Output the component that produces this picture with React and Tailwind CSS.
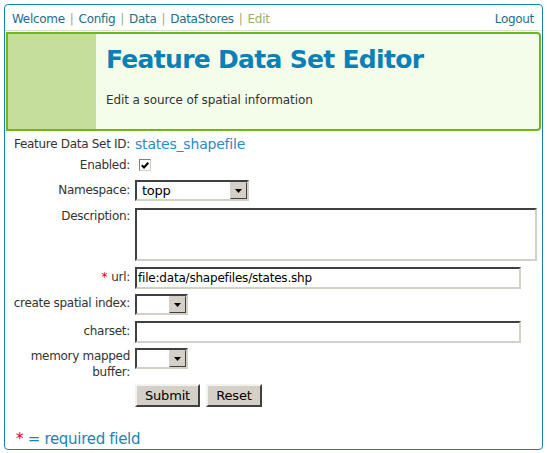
import React from 'react';

function Select({ width, value }) {
  return (
    <div
      className={`flex h-[21px] ${width} border-2 border-t-[#404040] border-l-[#404040] border-b-[#d4d0c8] border-r-[#d4d0c8] bg-white`}
    >
      <div className="flex-1 pl-[5px] text-[13px] leading-[17px] tracking-[-0.3px] text-black">{value}</div>
      <div className="flex w-[17px] items-center justify-center border border-t-[#d4d0c8] border-l-[#d4d0c8] border-b-[#404040] border-r-[#404040] bg-[#d4d0c8]">
        <svg width="7" height="4" viewBox="0 0 7 4">
          <path d="M0 0h7L3.5 4z" fill="#000" />
        </svg>
      </div>
    </div>
  );
}

function TextInput({ value, className = '' }) {
  return (
    <div
      className={`h-[22px] border-2 border-t-[#404040] border-l-[#404040] border-b-[#d4d0c8] border-r-[#d4d0c8] bg-white pl-[1px] text-[12px] leading-[18px] tracking-[-0.2px] text-black ${className}`}
    >
      {value}
    </div>
  );
}

function Row({ label, required, labelClass = '', className = '', children }) {
  return (
    <div className={`flex items-start ${className}`}>
      <div
        className={`w-[130px] shrink-0 pr-[5px] text-right text-[12px] leading-[16px] tracking-[-0.3px] text-[#333] ${labelClass}`}
      >
        {required && <span className="mr-1 text-[#e00000]">*</span>}
        {label}
      </div>
      {children}
    </div>
  );
}

export default function App() {
  return (
    <div className="h-[453px] w-[547px] bg-white p-[4px] font-['DejaVu_Sans',sans-serif]">
      <div className="flex h-[446px] w-[539px] flex-col rounded-[4px] border border-[#1a7fa6]">
        {/* Top nav */}
        <div className="flex h-[26px] items-center justify-between border-b border-[#d9e8c0] pl-[7px] pr-[8px] pt-[2px] text-[12px] tracking-[-0.3px] text-[#236e86]">
          <div className="flex items-center gap-[5px]">
            <span>Welcome</span>
            <span className="text-[#9aae70]">|</span>
            <span>Config</span>
            <span className="text-[#9aae70]">|</span>
            <span>Data</span>
            <span className="text-[#9aae70]">|</span>
            <span>DataStores</span>
            <span className="text-[#9aae70]">|</span>
            <span className="text-[#9aae70]">Edit</span>
          </div>
          <span>Logout</span>
        </div>

        {/* Title box */}
        <div className="mx-[1px] mt-[1px] flex h-[99px] shrink-0 rounded-r-[4px] border-2 border-[#72b41e] bg-[#f4fdea]">
          <div className="w-[88px] bg-[#c6de9c]" />
          <div className="flex flex-col pl-[10px] pt-[11px]">
            <h1 className="text-[25px] font-bold leading-[30px] tracking-[-0.7px] text-[#0a81b6]">
              Feature Data Set Editor
            </h1>
            <p className="mt-[16px] text-[12px] tracking-[-0.1px] text-[#333]">Edit a source of spatial information</p>
          </div>
        </div>

        {/* Form */}
        <div className="flex flex-col">
          <Row label="Feature Data Set ID:" className="mt-[4px]" labelClass="pt-[1px]">
            <div className="text-[14px] leading-[18px] tracking-[-0.2px] text-[#2b8bc2]">states_shapefile</div>
          </Row>

          <Row label="Enabled:" className="mt-[4px]">
            <div className="pl-[4px] pt-[2px]">
              <div className="flex h-[12px] w-[12px] items-center justify-center border border-t-[#808080] border-l-[#808080] border-b-[#d4d0c8] border-r-[#d4d0c8] bg-white">
                <svg width="8" height="7" viewBox="0 0 8 7">
                  <path d="M0.8 3.2l2.2 2.3L7.3 0.8" stroke="#000" strokeWidth="2" fill="none" />
                </svg>
              </div>
            </div>
          </Row>

          <Row label="Namespace:" className="mt-[7px]" labelClass="pt-[2px]">
            <Select width="w-[114px]" value="topp" />
          </Row>

          <Row label="Description:" className="mt-[7px]">
            <div className="h-[53px] w-[402px] border-2 border-t-[#404040] border-l-[#404040] border-b-[#d4d0c8] border-r-[#d4d0c8] bg-white" />
          </Row>

          <Row label="url:" required className="mt-[6px]" labelClass="pt-[2px]">
            <TextInput className="w-[386px]" value="file:data/shapefiles/states.shp" />
          </Row>

          <Row label="create spatial index:" className="mt-[5px]" labelClass="pt-[1px]">
            <Select width="w-[53px]" value="" />
          </Row>

          <Row label="charset:" className="mt-[6px]" labelClass="pt-[2px]">
            <TextInput className="w-[386px]" value="" />
          </Row>

          <Row
            label={
              <>
                memory mapped
                <br />
                buffer:
              </>
            }
            className="mt-[5px]"
          >
            <Select width="w-[53px]" value="" />
          </Row>

          <div className="mt-[4px] flex gap-[6px] pl-[130px]">
            <button className="h-[23px] w-[65px] border-2 border-t-[#f4f2ee] border-l-[#f4f2ee] border-b-[#404040] border-r-[#404040] bg-[#d4d0c8] text-[13px] tracking-[-0.2px] text-black">
              Submit
            </button>
            <button className="h-[23px] w-[56px] border-2 border-t-[#f4f2ee] border-l-[#f4f2ee] border-b-[#404040] border-r-[#404040] bg-[#d4d0c8] text-[13px] tracking-[-0.2px] text-black">
              Reset
            </button>
          </div>
        </div>

        <div className="mt-auto pl-[11px] text-[15px] leading-[20px] tracking-[-0.3px] text-[#1c84b4]">
          <span className="text-[#e00000]">*</span> = required field
        </div>
      </div>
    </div>
  );
}
